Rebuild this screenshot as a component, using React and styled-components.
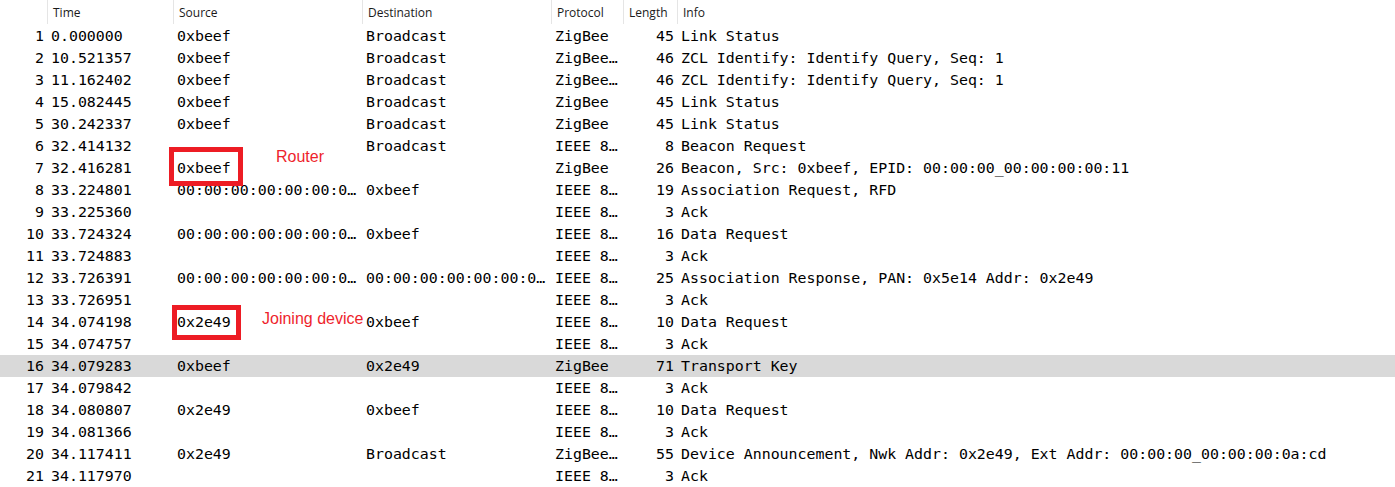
import React from "react";
import styled, { createGlobalStyle } from "styled-components";

const rows = [
  [1, "0.000000", "0xbeef", "Broadcast", "ZigBee", 45, "Link Status"],
  [2, "10.521357", "0xbeef", "Broadcast", "ZigBee…", 46, "ZCL Identify: Identify Query, Seq: 1"],
  [3, "11.162402", "0xbeef", "Broadcast", "ZigBee…", 46, "ZCL Identify: Identify Query, Seq: 1"],
  [4, "15.082445", "0xbeef", "Broadcast", "ZigBee", 45, "Link Status"],
  [5, "30.242337", "0xbeef", "Broadcast", "ZigBee", 45, "Link Status"],
  [6, "32.414132", "", "Broadcast", "IEEE 8…", 8, "Beacon Request"],
  [7, "32.416281", "0xbeef", "", "ZigBee", 26, "Beacon, Src: 0xbeef, EPID: 00:00:00_00:00:00:00:11"],
  [8, "33.224801", "00:00:00:00:00:00:0…", "0xbeef", "IEEE 8…", 19, "Association Request, RFD"],
  [9, "33.225360", "", "", "IEEE 8…", 3, "Ack"],
  [10, "33.724324", "00:00:00:00:00:00:0…", "0xbeef", "IEEE 8…", 16, "Data Request"],
  [11, "33.724883", "", "", "IEEE 8…", 3, "Ack"],
  [12, "33.726391", "00:00:00:00:00:00:0…", "00:00:00:00:00:00:0…", "IEEE 8…", 25, "Association Response, PAN: 0x5e14 Addr: 0x2e49"],
  [13, "33.726951", "", "", "IEEE 8…", 3, "Ack"],
  [14, "34.074198", "0x2e49", "0xbeef", "IEEE 8…", 10, "Data Request"],
  [15, "34.074757", "", "", "IEEE 8…", 3, "Ack"],
  [16, "34.079283", "0xbeef", "0x2e49", "ZigBee", 71, "Transport Key"],
  [17, "34.079842", "", "", "IEEE 8…", 3, "Ack"],
  [18, "34.080807", "0x2e49", "0xbeef", "IEEE 8…", 10, "Data Request"],
  [19, "34.081366", "", "", "IEEE 8…", 3, "Ack"],
  [20, "34.117411", "0x2e49", "Broadcast", "ZigBee…", 55, "Device Announcement, Nwk Addr: 0x2e49, Ext Addr: 00:00:00_00:00:00:0a:cd"],
  [21, "34.117970", "", "", "IEEE 8…", 3, "Ack"],
];

const columns = [
  { title: "", right: true },
  { title: "Time" },
  { title: "Source" },
  { title: "Destination" },
  { title: "Protocol" },
  { title: "Length", right: true },
  { title: "Info" },
];

const GlobalStyle = createGlobalStyle`
  html, body {
    margin: 0;
    padding: 0;
    background: #ffffff;
  }
`;

const Page = styled.div`
  position: relative;
  width: 1395px;
  height: 487px;
  overflow: hidden;
  background: #ffffff;
`;

const Grid = styled.div`
  display: grid;
  grid-template-columns: 47px 126px 189px 189px 72px 54px 1fr;
`;

const Header = styled.div`
  display: contents;
`;

const HeadCell = styled.div`
  height: 25px;
  line-height: 25px;
  padding-left: ${(p) => (p.$first ? "0" : "5px")};
  border-left: ${(p) => (p.$first ? "none" : "1px solid #e5e5e5")};
  border-image: linear-gradient(#e5e5e5 0 23px, transparent 23px) 1;
  font-family: "Open Sans", "Noto Sans", sans-serif;
  font-size: 12px;
  color: #1a1a1a;
  box-sizing: border-box;
  white-space: nowrap;
`;

const Row = styled.div`
  display: contents;
  & > div {
    background: ${(p) => (p.$selected ? "#d9d9d9" : "transparent")};
  }
`;

const Cell = styled.div`
  height: 22px;
  line-height: 22px;
  font-family: "DejaVu Sans Mono", "Liberation Mono", monospace;
  font-size: 14.9px;
  color: #000000;
  white-space: nowrap;
  text-align: ${(p) => (p.$right ? "right" : "left")};
  padding: ${(p) => (p.$right ? "0 3px 0 0" : "0 0 0 4px")};
`;

const Marker = styled.div`
  position: absolute;
  box-sizing: border-box;
  border: 5px solid #ed1c24;
  left: ${(p) => p.$x}px;
  top: ${(p) => p.$y}px;
  width: ${(p) => p.$w}px;
  height: ${(p) => p.$h}px;
`;

const Note = styled.div`
  position: absolute;
  left: ${(p) => p.$x}px;
  top: ${(p) => p.$y}px;
  font-family: "Liberation Sans", Arial, sans-serif;
  font-size: 16px;
  line-height: 16px;
  color: #ee1f2d;
  white-space: nowrap;
`;

export default function App() {
  return (
    <Page>
      <GlobalStyle />
      <Grid>
        <Header>
          {columns.map((c, i) => (
            <HeadCell key={i} $first={i === 0}>
              {c.title}
            </HeadCell>
          ))}
        </Header>
        {rows.map((r) => (
          <Row key={r[0]} $selected={r[0] === 16}>
            {r.map((v, i) => (
              <Cell key={i} $right={columns[i].right}>
                {v}
              </Cell>
            ))}
          </Row>
        ))}
      </Grid>

      <Marker $x={169} $y={147} $w={74} $h={39} />
      <Note $x={276} $y={149}>Router</Note>

      <Marker $x={172} $y={305} $w={69} $h={35} />
      <Note $x={262} $y={311}>Joining device</Note>
    </Page>
  );
}
